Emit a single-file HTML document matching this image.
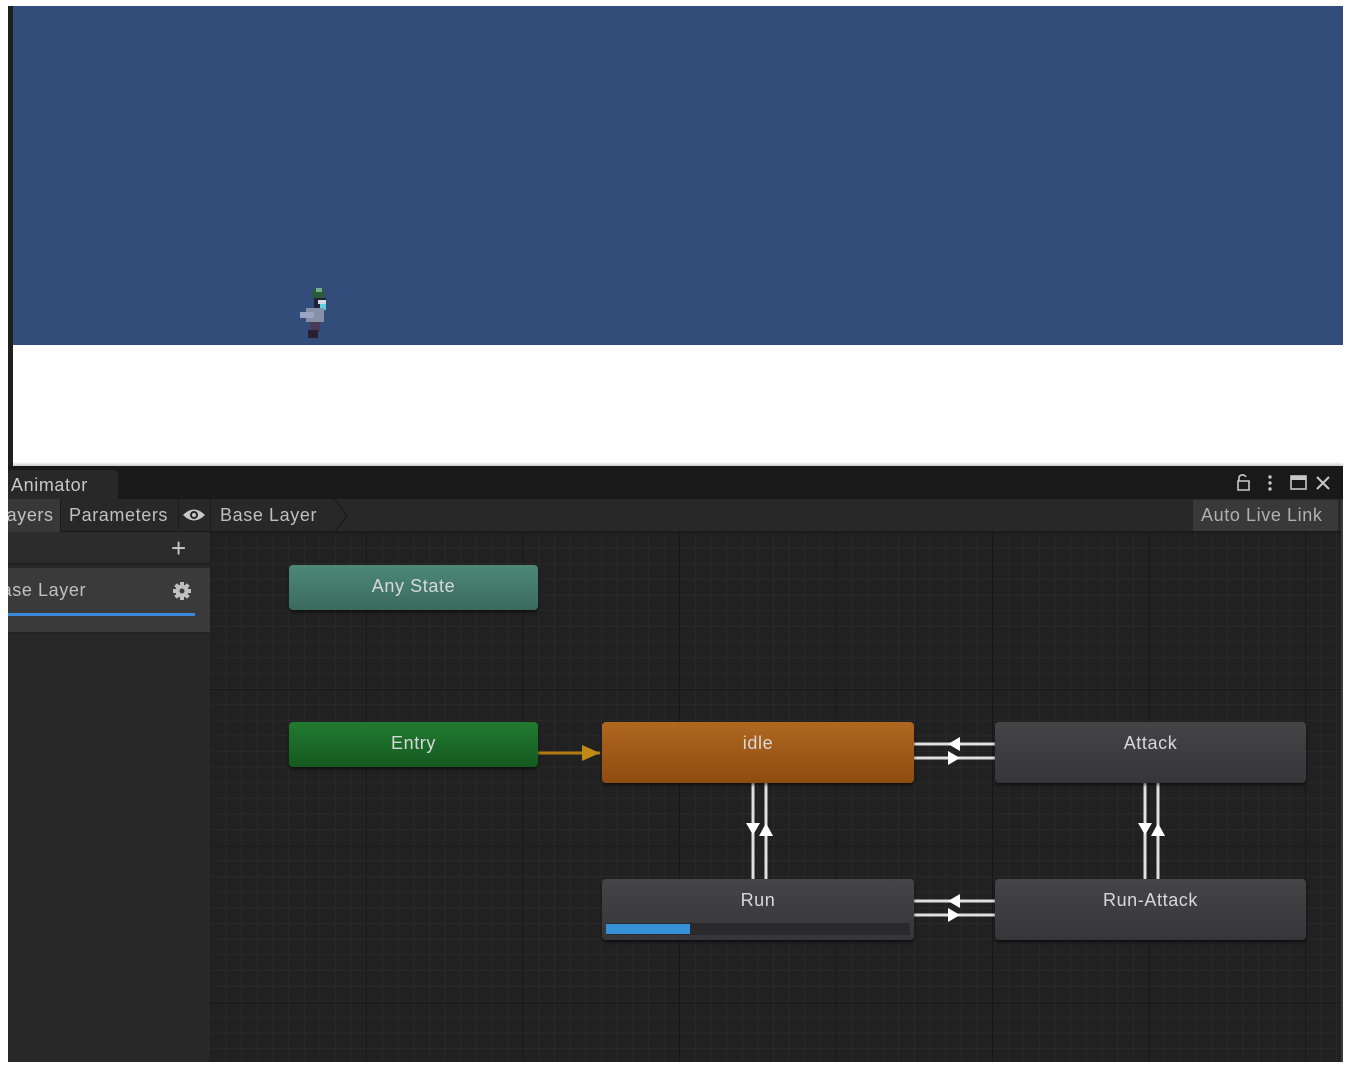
<!DOCTYPE html>
<html><head><meta charset="utf-8"><style>
*{margin:0;padding:0;box-sizing:border-box}
body{width:1354px;height:1073px;background:#fff;position:relative;overflow:hidden;font-family:"Liberation Sans","DejaVu Sans",sans-serif;letter-spacing:0.6px}
.a{position:absolute}
.node{position:absolute;border-radius:4px;color:#d8d8d8;font-size:18px;text-align:center;box-shadow:0 2px 3px rgba(0,0,0,.6)}
</style></head><body>
<div class="a" style="left:8px;top:6px;width:5px;height:1056px;background:#1e1e1e"></div>
<div class="a" style="left:13px;top:6px;width:1330px;height:339px;background:#324d79"></div>
<svg class="a" style="left:298px;top:288px" width="36" height="52" viewBox="0 0 36 52">
<rect x="14" y="2" width="12" height="8" fill="#2a5a3a"/><rect x="18" y="0" width="6" height="4" fill="#6fb08a"/>
<rect x="16" y="10" width="12" height="12" fill="#1e2438"/><rect x="20" y="12" width="8" height="4" fill="#d8d8e8"/>
<rect x="22" y="16" width="6" height="6" fill="#5fd0e0"/>
<rect x="8" y="20" width="18" height="14" fill="#8890a8"/><rect x="2" y="24" width="14" height="6" fill="#9aa4c0"/>
<rect x="12" y="34" width="10" height="10" fill="#4a3a5a"/><rect x="10" y="42" width="10" height="8" fill="#2a1e30"/>
</svg>
<div class="a" style="left:13px;top:462px;width:1330px;height:4px;background:linear-gradient(#fff,#ccc)"></div>
<div class="a" style="left:8px;top:466px;width:1335px;height:33px;background:#191919"></div>
<div class="a" style="left:8px;top:470px;width:110px;height:29px;background:#282828;border-radius:3px 3px 0 0;color:#c8c8c8;font-size:18px;padding:5px 0 0 3px">Animator</div>
<div class="a" style="left:1236px;top:472px;color:#c8c8c8;font-size:18px">
<svg width="100" height="22" viewBox="0 0 100 22"><path d="M2 9h11v9H2zM3 9V5a4 4 0 0 1 7 0" fill="none" stroke="#c8c8c8" stroke-width="1.6"/>
<circle cx="34" cy="5" r="1.7" fill="#c8c8c8"/><circle cx="34" cy="11" r="1.7" fill="#c8c8c8"/><circle cx="34" cy="17" r="1.7" fill="#c8c8c8"/>
<rect x="55" y="4" width="15" height="13" fill="none" stroke="#c8c8c8" stroke-width="1.6"/><rect x="55" y="4" width="15" height="4" fill="#c8c8c8"/>
<path d="M81 5l12 12M93 5L81 17" stroke="#c8c8c8" stroke-width="2"/></svg></div>
<div class="a" style="left:8px;top:499px;width:1335px;height:33px;background:#282828;border-bottom:1px solid #1a1a1a"></div>
<div class="a" style="left:8px;top:499px;width:52px;height:33px;background:#383838;color:#c0c0c0;font-size:18px;padding-top:6px;overflow:hidden;white-space:nowrap;text-indent:-12px">Layers</div>
<div class="a" style="left:60px;top:499px;width:1px;height:33px;background:#1c1c1c"></div>
<div class="a" style="left:69px;top:505px;color:#c0c0c0;font-size:18px">Parameters</div>
<div class="a" style="left:178px;top:499px;width:1px;height:33px;background:#1c1c1c"></div>
<svg class="a" style="left:182px;top:507px" width="24" height="16" viewBox="0 0 24 16"><path d="M1 8Q12-3 23 8Q12 19 1 8z" fill="#c8c8c8"/><circle cx="12" cy="8" r="4" fill="#282828"/><circle cx="12" cy="8" r="2" fill="#c8c8c8"/></svg>
<div class="a" style="left:210px;top:499px;width:1px;height:33px;background:#1c1c1c"></div>
<div class="a" style="left:220px;top:505px;color:#c0c0c0;font-size:18px">Base Layer</div>
<svg class="a" style="left:333px;top:499px" width="20" height="33"><path d="M2 0L14 16.5L2 33" fill="none" stroke="#1c1c1c" stroke-width="1.5"/></svg>
<div class="a" style="left:1193px;top:500px;width:145px;height:31px;background:#393939;color:#b0b0b0;font-size:18px;padding:5px 0 0 8px">Auto Live Link</div>
<div class="a" style="left:8px;top:532px;width:202px;height:530px;background:#282828"></div>
<div class="a" style="left:8px;top:532px;width:202px;height:33px;background:#2c2c2c;border-bottom:2px solid #1f1f1f"></div>
<div class="a" style="left:171px;top:535px;color:#c8c8c8;font-size:26px;line-height:26px">+</div>
<div class="a" style="left:8px;top:568px;width:202px;height:66px;background:#3a3a3a;border-bottom:2px solid #232323"></div>
<div class="a" style="left:8px;top:580px;color:#c0c0c0;font-size:18px;width:100px;overflow:hidden;white-space:nowrap;text-indent:-19px">Base Layer</div>
<svg class="a" style="left:172px;top:581px" width="20" height="20" viewBox="0 0 20 20"><g fill="#c0c0c0"><circle cx="10" cy="10" r="6.5"/><rect x="8" y="1" width="4" height="18"/><rect x="1" y="8" width="18" height="4"/><rect x="8" y="1" width="4" height="18" transform="rotate(45 10 10)"/><rect x="8" y="1" width="4" height="18" transform="rotate(-45 10 10)"/></g><circle cx="10" cy="10" r="2.5" fill="#3a3a3a"/></svg>
<div class="a" style="left:8px;top:613px;width:187px;height:3px;background:#3a88d8"></div>
<div class="a" style="left:210px;top:532px;width:1131px;height:530px;background-color:#212121;
background-image:linear-gradient(90deg,#171717 1px,transparent 1px),linear-gradient(#171717 1px,transparent 1px),linear-gradient(90deg,#292929 1px,transparent 1px),linear-gradient(#292929 1px,transparent 1px);
background-size:156.5px 156.5px,156.5px 156.5px,15.65px 15.65px,15.65px 15.65px;
background-position:156px 0,0 157px,0 0,0 0"></div>
<div class="a" style="left:1341px;top:499px;width:2px;height:563px;background:#3a3a3a"></div>
<svg class="a" style="left:0;top:0" width="1354" height="1073">
<g stroke="#e0e0e0" stroke-width="3" fill="none">
<path d="M914 744H995M914 758H995M914 901H995M914 915H995M753 782V879M766 782V879M1145 782V879M1158 782V879"/>
</g>
<g fill="#fff">
<path d="M948 744l12-7v14z M960 758l-12-7v14z M948 901l12-7v14z M960 915l-12-7v14z"/>
<path d="M753 835l-7-12h14z M766 823l-7 13h14z M1145 835l-7-12h14z M1158 823l-7 13h14z"/>
</g>
<path d="M538 753H600" stroke="#b27a10" stroke-width="3"/><path d="M600 753l-18-8v16z" fill="#c08a18"/>
</svg>
<div class="node" style="left:289px;top:565px;width:249px;height:45px;background:linear-gradient(#4d8878,#3a6a5e);padding-top:11px">Any State</div>
<div class="node" style="left:289px;top:722px;width:249px;height:45px;background:linear-gradient(#227a30,#145a20);padding-top:11px">Entry</div>
<div class="node" style="left:602px;top:722px;width:312px;height:61px;background:linear-gradient(#b06820,#8e4c10);padding-top:11px">idle</div>
<div class="node" style="left:995px;top:722px;width:311px;height:61px;background:linear-gradient(#454548,#36363a);padding-top:11px">Attack</div>
<div class="node" style="left:602px;top:879px;width:312px;height:61px;background:linear-gradient(#454548,#36363a);padding-top:11px">Run
<div class="a" style="left:4px;top:44px;width:304px;height:12px;background:#2a2a2d;border-radius:2px"><div style="width:84px;height:10px;background:#3590d8;margin-top:1px"></div></div></div>
<div class="node" style="left:995px;top:879px;width:311px;height:61px;background:linear-gradient(#454548,#36363a);padding-top:11px">Run-Attack</div>
</body></html>
